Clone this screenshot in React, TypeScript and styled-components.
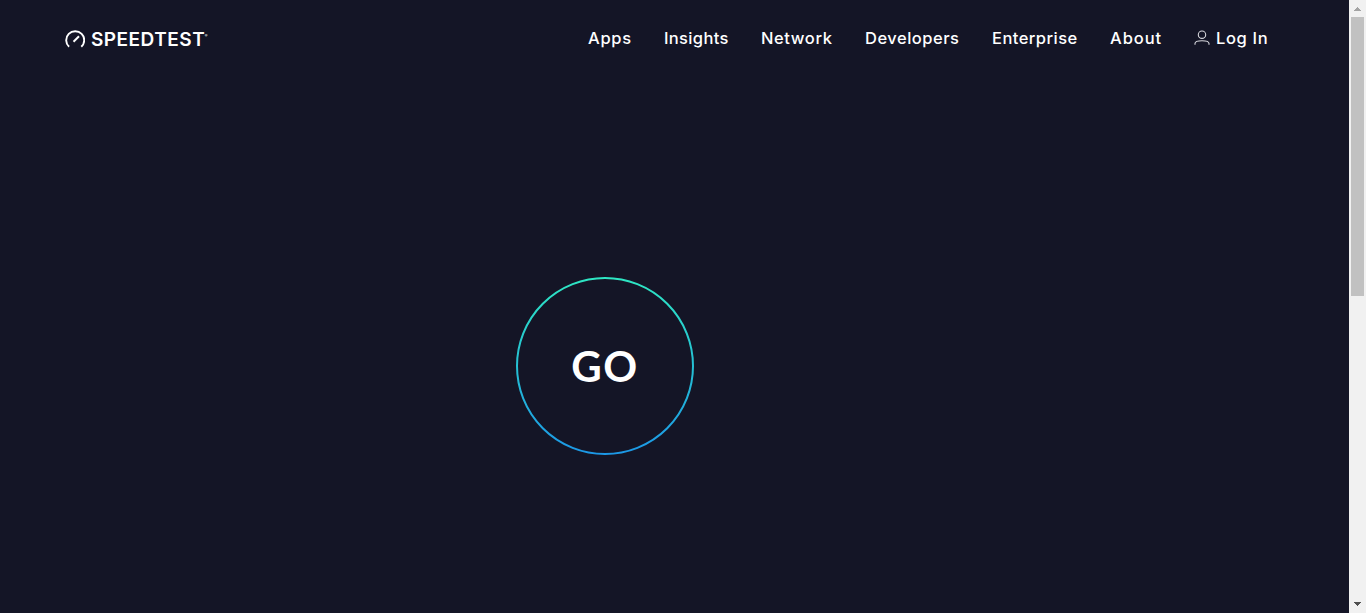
import React from "react";
import styled, { createGlobalStyle } from "styled-components";

const GlobalStyle = createGlobalStyle`
  * { box-sizing: border-box; }
  html, body { margin: 0; background: #141526; overflow: hidden; }
`;
const Page = styled.div`
  display: flex;
  width: 100%;
  height: 613px;
  color: #fff;
  background: #141526;
  font-family: Inter, "Liberation Sans", sans-serif;
`;
const Content = styled.div`
  flex: 1;
  display: flex;
  flex-direction: column;
`;
const Header = styled.header`
  height: 76px;
  display: flex;
  align-items: center;
  justify-content: space-between;
  padding: 0 81px 0 65px;
`;
const Logo = styled.a`
  display: flex;
  align-items: center;
  gap: 6px;
  padding-top: 3px;
  svg { display: block; }
`;
const Wordmark = styled.span`
  font-size: 19px;
  line-height: 20px;
  font-weight: 600;
  letter-spacing: 0.5px;
  white-space: nowrap;
`;
const Mark = styled.sup`
  margin-left: -0.5px;
  font-size: 4px;
  line-height: 0;
  letter-spacing: 0;
  vertical-align: 9px;
`;
const Nav = styled.nav`
  display: flex;
  align-items: center;
  gap: 32px;
`;
const NavLink = styled.a<{ $width: number; $spacing?: number }>`
  display: flex;
  align-items: center;
  gap: 6px;
  width: ${(p) => p.$width}px;
  font-size: 16.5px;
  line-height: 20px;
  font-weight: 500;
  letter-spacing: ${(p) => p.$spacing ?? 0}px;
  white-space: nowrap;
  svg { flex: none; }
`;
const Stage = styled.main`
  display: flex;
  padding: 200px 0 0 515px;
`;
const GoButton = styled.button`
  display: grid;
  place-items: center;
  width: 180px;
  height: 180px;
  padding: 0;
  border: 0;
  background: none;
  color: #fff;
  font-family: inherit;
  > * { grid-area: 1 / 1; }
`;
const GoLabel = styled.span`
  font-family: Lato, sans-serif;
  font-size: 42px;
  line-height: 48px;
  font-weight: 700;
  letter-spacing: 1.5px;
`;
const Scrollbar = styled.aside`
  width: 17px;
  display: flex;
  flex-direction: column;
  align-items: center;
  background: #f1f1f1;
`;
const Arrow = styled.div`
  height: 17px;
  svg { display: block; }
`;
const Thumb = styled.div`
  width: 13px;
  height: 279px;
  margin-bottom: auto;
  background: #c1c1c1;
`;

const links = [
  { label: "Apps", width: 44, spacing: 0.7 },
  { label: "Insights", width: 65, spacing: 0.35 },
  { label: "Network", width: 72, spacing: 0.6 },
  { label: "Developers", width: 95, spacing: 0.5 },
  { label: "Enterprise", width: 86, spacing: 0.45 },
  { label: "About", width: 52, spacing: 0.95 },
];

export default function App() {
  return (
    <>
      <GlobalStyle />
      <Page>
        <Content>
          <Header>
            <Logo>
              <svg width="20" height="20" viewBox="0 0 20 20" fill="none" stroke="#fff" strokeWidth="1.9">
                <path d="M4.1 16.8A9 9 0 1 1 16.3 16.8" />
                <path d="M8.5 11.8 14 6.3" strokeWidth="2" />
              </svg>
              <Wordmark>SPEEDTEST<Mark>®</Mark></Wordmark>
            </Logo>
            <Nav>
              {links.map((l) => (
                <NavLink key={l.label} $width={l.width} $spacing={l.spacing}>{l.label}</NavLink>
              ))}
              <NavLink $width={74} $spacing={0.65}>
                <svg width="16" height="16" viewBox="0 0 16 16" fill="none" stroke="#d6d6dc" strokeWidth="1.1">
                  <circle cx="8" cy="4.7" r="3.7" />
                  <path d="M1 14.8V13.6C1 11.8 4.2 10.8 8 10.8S15 11.8 15 13.6V14.8" />
                </svg>
                Log In
              </NavLink>
            </Nav>
          </Header>
          <Stage>
            <GoButton>
              <svg width="180" height="180" viewBox="0 0 180 180" fill="none">
                <defs>
                  <linearGradient id="ring" x1="0" y1="0" x2="0" y2="1">
                    <stop offset="0" stopColor="#2ee6c3" />
                    <stop offset="0.5" stopColor="#25c0d4" />
                    <stop offset="1" stopColor="#1c98e6" />
                  </linearGradient>
                </defs>
                <circle cx="90" cy="90" r="88" stroke="url(#ring)" strokeWidth="2" />
              </svg>
              <GoLabel>GO</GoLabel>
            </GoButton>
          </Stage>
        </Content>
        <Scrollbar>
          <Arrow>
            <svg width="17" height="17" shapeRendering="crispEdges">
              <path d="M8 7h1v1h1v1h1v1h1v1H5v-1h1V9h1V8h1z" fill="#a3a3a3" />
            </svg>
          </Arrow>
          <Thumb />
          <Arrow>
            <svg width="17" height="17" shapeRendering="crispEdges">
              <path d="M5 6h7v1h-1v1h-1v1H9v1H8V9H7V8H6V7H5z" fill="#505050" />
            </svg>
          </Arrow>
        </Scrollbar>
      </Page>
    </>
  );
}
